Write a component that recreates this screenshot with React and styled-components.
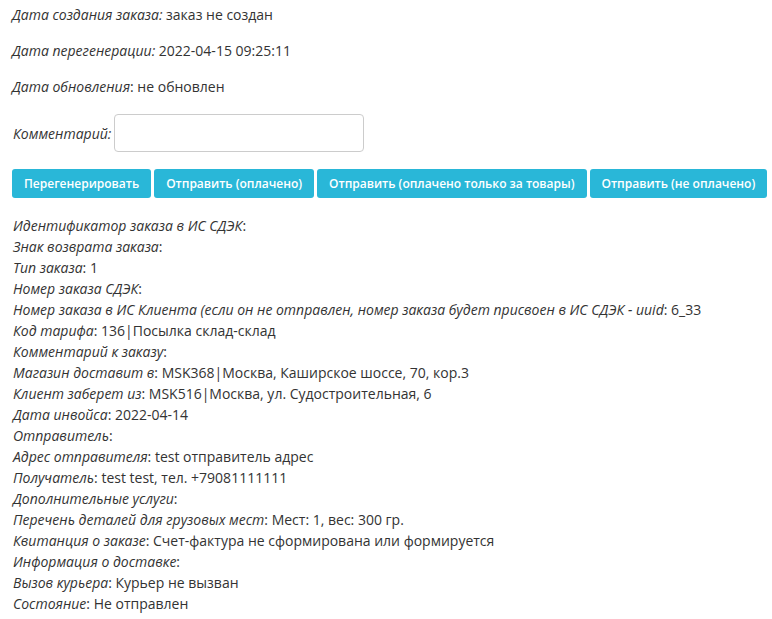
import styled, { createGlobalStyle } from "styled-components";

const GlobalStyle = createGlobalStyle`
  body {
    margin: 0;
    background: #fff;
    font-family: "Open Sans", "DejaVu Sans", sans-serif;
    font-size: 14px;
    color: #333;
  }
`;

const Page = styled.div`
  padding: 5px 12px 0;
`;

const Line = styled.p`
  margin: 0 0 16px;
  line-height: 20px;
`;

const Label = styled.em`
  font-style: italic;
`;

const CommentRow = styled.div`
  display: flex;
  align-items: center;
  gap: 3px;
  margin-top: 17px;
  padding-left: 1px;
`;

const CommentInput = styled.input`
  width: 250px;
  height: 38px;
  box-sizing: border-box;
  border: 1px solid #ccc;
  border-radius: 4px;
  padding: 6px 10px;
  font: inherit;
  outline: none;
`;

const Actions = styled.div`
  display: flex;
  gap: 3px;
  margin-top: 17px;
`;

const ActionButton = styled.button`
  height: 29px;
  padding: 0 12px;
  border: none;
  border-radius: 3px;
  background: #29b7d8;
  color: #fff;
  font-family: "Open Sans", sans-serif;
  font-weight: 600;
  font-size: 12px;
  white-space: nowrap;
  cursor: pointer;
`;

const InfoList = styled.div`
  margin-top: 17px;
  padding-left: 1px;
  line-height: 21px;
`;

const InfoRow = styled.div`
  white-space: nowrap;
`;

const info = [
  ["Идентификатор заказа в ИС СДЭК", ""],
  ["Знак возврата заказа", ""],
  ["Тип заказа", "1"],
  ["Номер заказа СДЭК", ""],
  ["Номер заказа в ИС Клиента (если он не отправлен, номер заказа будет присвоен в ИС СДЭК - uuid", "6_33"],
  ["Код тарифа", "136|Посылка склад-склад"],
  ["Комментарий к заказу", ""],
  ["Магазин доставит в", "MSK368|Москва, Каширское шоссе, 70, кор.3"],
  ["Клиент заберет из", "MSK516|Москва, ул. Судостроительная, 6"],
  ["Дата инвойса", "2022-04-14"],
  ["Отправитель", ""],
  ["Адрес отправителя", "test отправитель адрес"],
  ["Получатель", "test test, тел. +79081111111"],
  ["Дополнительные услуги", ""],
  ["Перечень деталей для грузовых мест", "Мест: 1, вес: 300 гр."],
  ["Квитанция о заказе", "Счет-фактура не сформирована или формируется"],
  ["Информация о доставке", ""],
  ["Вызов курьера", "Курьер не вызван"],
  ["Состояние", "Не отправлен"],
];

const buttons = [
  "Перегенерировать",
  "Отправить (оплачено)",
  "Отправить (оплачено только за товары)",
  "Отправить (не оплачено)",
];

export default function App() {
  return (
    <Page>
      <GlobalStyle />
      <Line>
        <Label>Дата создания заказа:</Label> заказ не создан
      </Line>
      <Line>
        <Label>Дата перегенерации:</Label> 2022-04-15 09:25:11
      </Line>
      <Line>
        <Label>Дата обновления</Label>: не обновлен
      </Line>
      <CommentRow>
        <Label>Комментарий:</Label>
        <CommentInput type="text" />
      </CommentRow>
      <Actions>
        {buttons.map((b) => (
          <ActionButton key={b}>{b}</ActionButton>
        ))}
      </Actions>
      <InfoList>
        {info.map(([label, value]) => (
          <InfoRow key={label}>
            <Label>{label}</Label>:{value ? ` ${value}` : ""}
          </InfoRow>
        ))}
      </InfoList>
    </Page>
  );
}
